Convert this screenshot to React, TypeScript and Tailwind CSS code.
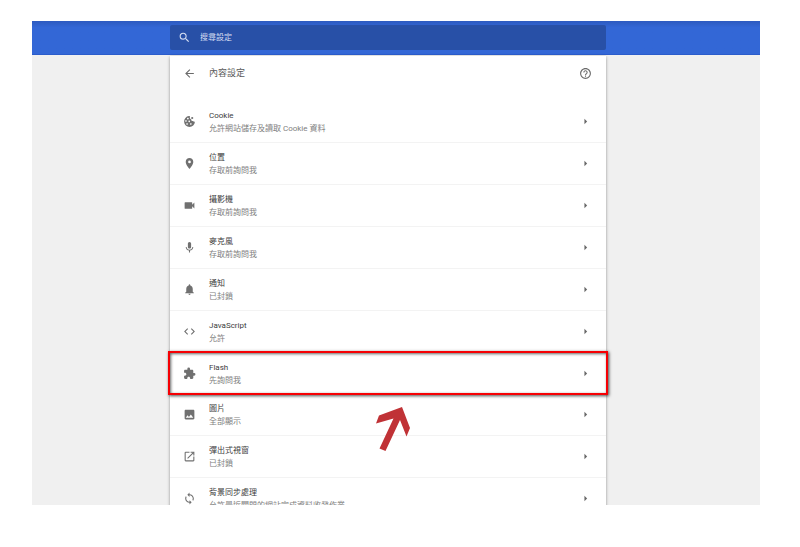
import type { IconType } from 'react-icons';
import {
  MdArrowBack,
  MdArrowRight,
  MdCode,
  MdExtension,
  MdHelpOutline,
  MdImage,
  MdMic,
  MdNotifications,
  MdOpenInNew,
  MdPlace,
  MdSearch,
  MdSync,
  MdVideocam,
} from 'react-icons/md';

interface ContentSetting {
  icon: IconType;
  title: string;
  status: string;
  highlighted?: boolean;
}

const CookieIcon: IconType = ({ className }) => (
  <svg viewBox="0 0 24 24" className={className} fill="currentColor" aria-hidden="true">
    <path
      fillRule="evenodd"
      d="M11 2a10 10 0 1 0 11 10.5c-1.600.3-2.900-.2-3.600-1.300-1.900.2-3.300-1.200-3.100-3.100C13.200 7.300 11.800 5 13 2.300Q12 2 11 2ZM9 5a1.500 1.500 0 1 0 .01 0ZM5.500 9.500a1.500 1.500 0 1 0 .01 0ZM11.500 10a1.500 1.500 0 1 0 .01 0ZM7.500 15a1.500 1.500 0 1 0 .01 0ZM14.500 15a1.500 1.500 0 1 0 .01 0Z"
    />
    <circle cx="17" cy="5.500" r="2" />
  </svg>
);

const settings: ContentSetting[] = [
  { icon: CookieIcon, title: 'Cookie', status: '允許網站儲存及讀取 Cookie 資料' },
  { icon: MdPlace, title: '位置', status: '存取前詢問我' },
  { icon: MdVideocam, title: '攝影機', status: '存取前詢問我' },
  { icon: MdMic, title: '麥克風', status: '存取前詢問我' },
  { icon: MdNotifications, title: '通知', status: '已封鎖' },
  { icon: MdCode, title: 'JavaScript', status: '允許' },
  { icon: MdExtension, title: 'Flash', status: '先詢問我', highlighted: true },
  { icon: MdImage, title: '圖片', status: '全部顯示' },
  { icon: MdOpenInNew, title: '彈出式視窗', status: '已封鎖' },
  { icon: MdSync, title: '背景同步處理', status: '允許最近關閉的網站完成資料收發作業' },
];

function Callout() {
  return (
    <>
      <div className="pointer-events-none absolute -inset-x-0.5 -top-0.5 -bottom-px border-2 border-[#f60004] shadow-[1px_1px_3px_rgba(0,0,0,0.7),inset_1px_1px_3px_rgba(0,0,0,0.6)]" />
      <svg
        viewBox="0 0 34 44"
        className="pointer-events-none absolute top-full left-[206px] mt-[13px] h-11 w-[34px]"
        aria-hidden="true"
      >
        <path d="M26 0 L34 21 L30.5 29.5 L24 13 L9.5 44 L3.5 41.5 L17.5 11.5 L0 16.5 L3 8.5 Z" fill="#c03236" />
      </svg>
    </>
  );
}

function SettingRow({ setting }: { setting: ContentSetting }) {
  const Icon = setting.icon;
  return (
    <li className={setting.highlighted ? 'relative z-10' : 'border-b border-[#f3f3f3] last:border-b-0'}>
      <button type="button" className="flex h-[41px] w-full items-center pr-[14px] pl-[13px] text-left">
        <Icon className="size-[13px] shrink-0 text-[#707070]" />
        <span className="ml-[13px] min-w-0 flex-1 text-[8px] leading-[13px]">
          <span className="block text-[#3c3c3c]">{setting.title}</span>
          <span className="block whitespace-nowrap text-[#808080]">{setting.status}</span>
        </span>
        <MdArrowRight className="size-[13px] shrink-0 text-[#666]" />
      </button>
      {setting.highlighted && <Callout />}
    </li>
  );
}

export default function App() {
  return (
    <div className="flex h-screen overflow-hidden bg-white pt-[21px] pr-10 pb-[42px] pl-8 [font-family:'Roboto','Noto_Sans_CJK_TC',sans-serif]">
      <div className="flex min-w-0 flex-1 flex-col overflow-hidden bg-[#f0f0f0]">
        <header className="shrink-0 border-b border-[#2b5ccb] bg-[#3367d6] bg-linear-to-b from-[#2d5abf] to-[#3367d6] to-20% pt-1 pr-4 pb-1">
          <label className="mx-auto flex h-[25px] max-w-[436px] items-center rounded-xs bg-[#2850a7] pl-2 text-[#d5def2]">
            <MdSearch className="size-[13px] shrink-0" />
            <input
              type="search"
              aria-label="搜尋設定"
              placeholder="搜尋設定"
              className="ml-[9px] min-w-0 flex-1 bg-transparent text-[8px] outline-none placeholder:text-[#d5def2]"
            />
          </label>
        </header>

        <main className="pt-px pr-4">
          <section className="mx-auto max-w-[436px] bg-white pb-4 shadow-[0_1px_3px_rgba(0,0,0,0.4)]">
            <div className="flex h-[35px] items-center pr-[14px] pl-[13px] text-[#6a6a6a]">
              <button type="button" aria-label="返回">
                <MdArrowBack className="size-[13px]" />
              </button>
              <h1 className="ml-[13px] flex-1 text-[9px] text-[#5a5a5a]">內容設定</h1>
              <button type="button" aria-label="說明">
                <MdHelpOutline className="size-[13px]" />
              </button>
            </div>
            <ul className="pt-[10px]">
              {settings.map((setting) => (
                <SettingRow key={setting.title} setting={setting} />
              ))}
            </ul>
          </section>
        </main>
      </div>
    </div>
  );
}
